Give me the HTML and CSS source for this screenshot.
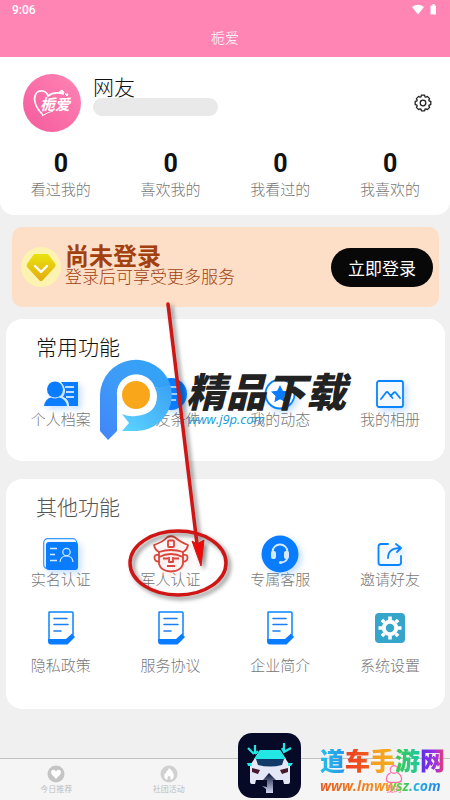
FILE: index.html
```html
<!DOCTYPE html>
<html lang="zh-CN">
<head>
    <meta charset="UTF-8">
    <meta name="viewport" content="width=device-width, initial-scale=1.0">
    <title>栀爱</title>
    <link rel="stylesheet" href="styles.css">
</head>
<body>
    <!-- Shared icon shapes -->
    <svg class="defs" width="0" height="0">
        <symbol id="doc" viewBox="0 0 28 34">
            <path d="M2 28V1.500Q2 1 2.500 1H25Q26 1 26 2V24" fill="#fff" stroke="#0a84ff" stroke-width="1.500"/>
            <path d="M1 28H19L25 22.500L28 26L20.500 33.500H4Q1 33.500 1 30Z" fill="#0a7cff"/>
            <path d="M7 7.500H20M7 13.500H21M7 20H14" stroke="#1a80f0" stroke-width="1.600" stroke-linecap="round"/>
        </symbol>
    </svg>

    <header class="header">
        <div class="status-bar">
            <span>9:06</span>
            <svg width="26" height="12" viewBox="0 0 26 12" fill="#fff">
                <path d="M0 3Q6 -1.500 12 3L6 10.500Z"/>
                <path d="M19 1.500H20.500V0H22.500V1.500H24V10.500H18.500V1.500Z"/>
            </svg>
        </div>
        <h1 class="header-title">栀爱</h1>
    </header>

    <main class="content">
        <section class="profile">
            <div class="profile-row">
                <div class="avatar">
                    <svg class="avatar-heart" width="58" height="58" viewBox="0 0 58 58" fill="none" stroke="#fff">
                        <path d="M20 41Q12 33 11.500 25Q12 16 20 17Q24 18 25 22Q31 17 41 20" stroke-width="1.700"/>
                        <path d="M19 42Q25 38 30 37" stroke-width="1"/>
                        <path d="M36 18L39 16L41 18L40 20ZM42 20L45 20L44 22Z" fill="#fff" stroke-width="1"/>
                    </svg>
                    <span class="avatar-text">栀爱</span>
                </div>
                <div class="profile-info">
                    <h2 class="profile-name">网友</h2>
                    <div class="profile-id"></div>
                </div>
                <button class="gear-btn" aria-label="设置">
                    <svg width="18" height="18" viewBox="0 0 18 18" fill="none" stroke="#222" stroke-width="1.300" stroke-linejoin="round">
                        <path d="M7.400 1.200H10.600L11 2.800L12 3.200L13.400 2.400L15.600 4.600L14.800 6L15.200 7L16.800 7.400V10.600L15.200 11L14.800 12L15.600 13.400L13.400 15.600L12 14.800L11 15.200L10.600 16.800H7.400L7 15.200L6 14.800L4.600 15.600L2.400 13.400L3.200 12L2.800 11L1.200 10.600V7.400L2.800 7L3.200 6L2.400 4.600L4.600 2.400L6 3.200L7 2.800Z"/>
                        <circle cx="9" cy="9" r="2.800"/>
                    </svg>
                </button>
            </div>
            <div class="stats">
                <a href="#" class="stat"><b>0</b><span>看过我的</span></a>
                <a href="#" class="stat"><b>0</b><span>喜欢我的</span></a>
                <a href="#" class="stat"><b>0</b><span>我看过的</span></a>
                <a href="#" class="stat"><b>0</b><span>我喜欢的</span></a>
            </div>
        </section>

        <section class="banner">
            <svg width="40" height="40" viewBox="0 0 40 40">
                <defs>
                    <linearGradient id="gem" x1="0" y1="0" x2="0" y2="1">
                        <stop offset="0" stop-color="#e8e30e"/>
                        <stop offset="1" stop-color="#e5a910"/>
                    </linearGradient>
                </defs>
                <circle cx="20" cy="20" r="20" fill="#fcf3b0"/>
                <path d="M13 7H27L34.500 17Q35 19 33.500 20.500L21.500 33.500Q20 35 18.500 33.500L6.500 20.500Q5 19 6 17Z" fill="url(#gem)"/>
                <path d="M14 19L20 25L26 19" fill="none" stroke="#fff" stroke-width="2.400" stroke-linecap="round" stroke-linejoin="round"/>
            </svg>
            <div class="banner-text">
                <h2>尚未登录</h2>
                <p>登录后可享受更多服务</p>
            </div>
            <button class="login-btn">立即登录</button>
        </section>

        <section class="card">
            <h2 class="card-title dark">常用功能</h2>
            <div class="menu">
                <a href="#" class="item">
                    <span class="icon shadow">
                        <svg width="34" height="26" viewBox="0 0 34 26" fill="#0a7cff">
                            <path d="M17 1H34V25H25Q25 18 19 16Q24 9 17 1Z"/>
                            <circle cx="11" cy="8.500" r="8"/>
                            <path d="M0 25Q1 18 7 16.500Q11 18.500 15 16.500Q22 18 23 25Z"/>
                            <path d="M21 6H30M22 11H30M22 16H30" stroke="#fff" stroke-width="1.600"/>
                        </svg>
                    </span>
                    <span>个人档案</span>
                </a>
                <a href="#" class="item">
                    <span class="icon shadow">
                        <svg width="34" height="34" viewBox="0 0 34 34">
                            <circle cx="17" cy="17" r="16" fill="#0a7cff"/>
                            <path d="M12 10H24M12 17H24M12 23H22" stroke="#d6eaff" stroke-width="1.600"/>
                        </svg>
                    </span>
                    <span>择友条件</span>
                </a>
                <a href="#" class="item">
                    <span class="icon shadow">
                        <svg width="32" height="32" viewBox="0 0 32 32">
                            <circle cx="16" cy="16" r="14.500" fill="#fff" stroke="#0a84ff" stroke-width="1.800"/>
                            <path d="M16 7L18.800 12.800L25 13.600L20.500 18L21.600 24.200L16 21.200L10.400 24.200L11.500 18L7 13.600L13.200 12.800Z" fill="#0a7cff"/>
                        </svg>
                    </span>
                    <span>我的动态</span>
                </a>
                <a href="#" class="item">
                    <span class="icon shadow">
                        <svg width="28" height="28" viewBox="0 0 28 28" fill="none" stroke="#0a84ff" stroke-width="1.800">
                            <rect x="1" y="1" width="26" height="26" rx="2" fill="#f3f9ff"/>
                            <path d="M5 19L10 12.500Q11 11.500 12 12.500L16.500 18M14.500 16L18 12.500Q19 11.500 20 13L24 18" stroke-linecap="round"/>
                        </svg>
                    </span>
                    <span>我的相册</span>
                </a>
            </div>

            <!-- Download site mark over the card -->
            <div class="mark">
                <svg width="76" height="84" viewBox="0 0 76 84">
                    <defs>
                        <linearGradient id="p1" x1="0" y1="1" x2="1" y2="0">
                            <stop offset="0" stop-color="#4285f8"/>
                            <stop offset="0.500" stop-color="#3d9cf8"/>
                            <stop offset="1" stop-color="#2fa5f5"/>
                        </linearGradient>
                        <linearGradient id="p2" x1="0" y1="1" x2="1" y2="0">
                            <stop offset="0" stop-color="#5cd4ff"/>
                            <stop offset="1" stop-color="#3aa0f5"/>
                        </linearGradient>
                    </defs>
                    <circle cx="37" cy="36" r="22" fill="#fff"/>
                    <path d="M0 72V36A36 36 0 0 1 70 25L55 29A19.500 19.500 0 0 0 17 37V72L8 81Z" fill="url(#p1)"/>
                    <path d="M55 29L70 25A36 36 0 0 1 37 72H22L29 64L22 55Q29 58 36 57Q57 55 57 37Q57 33 55 29Z" fill="url(#p2)"/>
                    <circle cx="36" cy="36" r="14" fill="#faa61a"/>
                </svg>
                <div class="mark-text">
                    <strong>精品下载</strong>
                    <em>www.j9p.com</em>
                </div>
            </div>
        </section>

        <section class="card other">
            <h2 class="card-title">其他功能</h2>
            <div class="menu">
                <a href="#" class="item">
                    <span class="icon shadow">
                        <svg width="36" height="32" viewBox="0 0 36 32" fill="none">
                            <rect x="0.700" y="0.700" width="33" height="30" rx="4" stroke="#3a9bff" stroke-width="1.200"/>
                            <rect x="3" y="4" width="32" height="28" rx="3" fill="#0a7cff"/>
                            <path d="M7 10.500H14M7 16.500H12M7 22.500H14" stroke="#d6eaff" stroke-width="1.300"/>
                            <circle cx="23.500" cy="14" r="3.700" stroke="#d6eaff" stroke-width="1.200"/>
                            <path d="M17 24Q17.500 18 23.500 18Q29.500 18 30 24" stroke="#d6eaff" stroke-width="1.200"/>
                        </svg>
                    </span>
                    <span>实名认证</span>
                </a>
                <a href="#" class="item">
                    <span class="icon red-shadow">
                        <svg width="36" height="38" viewBox="0 0 36 38" fill="none" stroke="#d9473c" stroke-width="1.800" stroke-linejoin="round">
                            <path d="M1 10Q10 7 14 2.500Q18 0 22 2.500Q27 7 35 10Q34 15 30 17Q18 13 6 17Q2 15 1 10Z"/>
                            <path d="M6 17V22Q18 16 30 22V17"/>
                            <rect x="15" y="5.500" width="6" height="6.500" rx="1"/>
                            <path d="M6 20Q1 19 1.500 23Q2 27 6 26.500M30 20Q35 19 34.500 23Q34 27 30 26.500"/>
                            <path d="M6 22V29Q8 36 18 36.500Q28 36 30 29V22"/>
                            <path d="M10 23.500H15M21 23.500H26M16 22V27H20V22M14 31H22"/>
                        </svg>
                    </span>
                    <span>军人认证</span>
                </a>
                <a href="#" class="item">
                    <span class="icon shadow">
                        <svg width="38" height="38" viewBox="0 0 38 38" fill="none">
                            <circle cx="19" cy="19" r="18.500" fill="#0a7cff"/>
                            <path d="M11.500 18V17A7.500 7.500 0 0 1 26.500 17V22Q26 27 20 27.500" stroke="#d6eaff" stroke-width="1.800"/>
                            <rect x="10" y="16" width="5" height="8" rx="2" fill="#d6eaff"/>
                            <rect x="23" y="16" width="5" height="8" rx="2" fill="#d6eaff"/>
                            <circle cx="19.500" cy="27.500" r="1.600" fill="#d6eaff"/>
                        </svg>
                    </span>
                    <span>专属客服</span>
                </a>
                <a href="#" class="item">
                    <span class="icon shadow">
                        <svg width="26" height="24" viewBox="0 0 26 24" fill="none" stroke="#0a84ff" stroke-width="1.800" stroke-linecap="round" stroke-linejoin="round">
                            <path d="M11 2H4Q1.500 2 1.500 4.500V20.500Q1.500 23 4 23H21.500Q24 23 24 20.500V14"/>
                            <path d="M11 16Q11 6 23.500 6M19 2L24 6L20 10"/>
                        </svg>
                    </span>
                    <span>邀请好友</span>
                </a>
                <a href="#" class="item spaced">
                    <span class="icon"><svg width="28" height="34"><use href="#doc"/></svg></span>
                    <span>隐私政策</span>
                </a>
                <a href="#" class="item spaced">
                    <span class="icon"><svg width="28" height="34"><use href="#doc"/></svg></span>
                    <span>服务协议</span>
                </a>
                <a href="#" class="item spaced">
                    <span class="icon"><svg width="28" height="34"><use href="#doc"/></svg></span>
                    <span>企业简介</span>
                </a>
                <a href="#" class="item spaced">
                    <span class="icon">
                        <svg width="30" height="30" viewBox="0 0 30 30">
                            <rect width="30" height="30" rx="4" fill="#35a5cc"/>
                            <circle cx="15" cy="15" r="6.200" fill="none" stroke="#fff" stroke-width="4"/>
                            <path d="M15 3.500V7M15 23V26.500M3.500 15H7M23 15H26.500M6.900 6.900L9.300 9.300M20.700 20.700L23.100 23.100M6.900 23.100L9.300 20.700M20.700 9.300L23.100 6.900" stroke="#fff" stroke-width="3.600"/>
                        </svg>
                    </span>
                    <span>系统设置</span>
                </a>
            </div>
        </section>

        <!-- Red arrow and ring pointing at 军人认证 -->
        <svg class="pointer" width="110" height="304" viewBox="0 0 110 304">
            <ellipse cx="53" cy="263" rx="48" ry="32" fill="none" stroke="#d01515" stroke-width="3.500"/>
            <path d="M43 4L72 244" stroke="#d01515" stroke-width="3.500" stroke-linecap="round"/>
            <path d="M67 241L72 244L79 240L76 266Z" fill="#f00808" stroke="#d01515" stroke-width="1"/>
        </svg>
    </main>

    <nav class="tabs">
        <a href="#" class="tab">
            <svg width="18" height="18" viewBox="0 0 18 18">
                <circle cx="9" cy="9" r="8.500" fill="#c4c4c4"/>
                <path d="M9 14L4.700 9.500Q3 6.500 5.500 5Q8 4.300 9 6.500Q10 4.300 12.500 5Q15 6.500 13.300 9.500Z" fill="#fff"/>
            </svg>
            <span>今日推荐</span>
        </a>
        <a href="#" class="tab">
            <svg width="18" height="18" viewBox="0 0 18 18">
                <circle cx="9" cy="9" r="8.500" fill="#d0d0d0"/>
                <path d="M9 3Q13 6 13.500 9Q14.500 12 12 14.500H10.500V12Q9 10 7.500 12V14.500H6Q3.500 12 4.500 9Q6 8.500 6.500 6.500Q8 6 9 3Z" fill="#fff"/>
            </svg>
            <span>社团活动</span>
        </a>
        <a href="#" class="tab active">
            <svg width="18" height="18" viewBox="0 0 18 18" fill="none" stroke="#ff6fa8" stroke-width="1.200">
                <circle cx="9" cy="4.500" r="3.800"/>
                <path d="M6 7.500Q1 10 1.500 15Q2 17.300 5 17.300H13Q16 17.300 16.500 15Q17 10 12 7.500"/>
            </svg>
            <span>我的</span>
        </a>

        <div class="site">
            <svg width="63" height="65" viewBox="0 0 63 65">
                <defs>
                    <linearGradient id="beam" x1="0" y1="0" x2="0" y2="1">
                        <stop offset="0" stop-color="#071033"/>
                        <stop offset="1" stop-color="#d5daf2"/>
                    </linearGradient>
                </defs>
                <rect width="63" height="65" rx="14" fill="#060a26"/>
                <path d="M22 17H42L49 28L52 32V49Q52 51 50 51H46L45 47H18L17 51H14Q12 51 12 49V32L15 28Z" fill="#e3e7f6"/>
                <path d="M22 17H42L48 26H16Z" fill="#22e7e5"/>
                <path d="M18 26H46L44 32Q32 35 20 32Z" fill="#123a68"/>
                <path d="M9 30H13L14 33H10ZM50 30H55L53 33H50Z" fill="#22e7e5"/>
                <path d="M14 35L22 37L20 41L14 39ZM50 35L42 37L44 41L50 39Z" fill="#46182c"/>
                <path d="M31 40L38 47H35V60H28V56L24 53L29 54V47H25Z" fill="url(#beam)"/>
                <path d="M17 12V21M10 15L16 21M17 21L20 18M46 10V19M44 15L46 19L53 15" fill="none" stroke="#22e7e5" stroke-width="2.200"/>
            </svg>
            <div class="site-text">
                <strong>道车手游网</strong>
                <em>www.lmwwsz.com</em>
            </div>
        </div>
    </nav>
</body>
</html>
```
FILE: styles.css
```css
* {
    box-sizing: border-box;
}
body {
    margin: 0;
    min-height: 100vh;
    display: flex;
    flex-direction: column;
    font-family: Roboto, "Noto Sans CJK SC", sans-serif;
    font-weight: 300;
    background-color: #f0f0f0;
    color: #111;
}
h1, h2, p {
    margin: 0;
    font-weight: 300;
}
a {
    color: inherit;
    text-decoration: none;
}
button {
    border: none;
    padding: 0;
    font-family: inherit;
    cursor: pointer;
}
svg {
    display: block;
    flex: none;
}
.defs {
    position: absolute;
}

/* Header */
.header {
    background-color: #ff85b5;
    color: #fff;
}
.status-bar {
    display: flex;
    justify-content: space-between;
    align-items: center;
    padding: 0 12px;
    font-size: 12px;
    font-weight: 500;
    line-height: 20px;
}
.header-title {
    font-size: 14px;
    line-height: 37px;
    text-align: center;
}

/* Profile */
.content {
    position: relative;
}
.profile {
    background-color: #fff;
    border-radius: 0 0 14px 14px;
    padding: 17px 5px 15px 6px;
}
.profile-row {
    display: flex;
    align-items: center;
    gap: 12px;
    padding: 0 13px 0 17px;
}
.avatar {
    position: relative;
    display: flex;
    align-items: center;
    justify-content: center;
    width: 58px;
    height: 58px;
    border-radius: 50%;
    background: linear-gradient(45deg, #f55a9c, #ff85b5);
    color: #fff;
}
.avatar-heart {
    position: absolute;
    top: 0;
    left: 0;
}
.avatar-text {
    padding-left: 6px;
    font-size: 15px;
    font-weight: 700;
    font-style: italic;
}
.profile-info {
    flex: 1;
    align-self: flex-start;
}
.profile-name {
    padding-top: 4px;
    font-size: 21px;
    line-height: 20px;
}
.profile-id {
    width: 125px;
    height: 18px;
    border-radius: 9px;
    background-color: #e9e9e9;
}
.gear-btn {
    background: none;
}
.stats {
    display: grid;
    grid-template-columns: repeat(4, 1fr);
    margin-top: 16px;
}
.stat {
    display: flex;
    flex-direction: column;
    align-items: center;
    font-size: 15px;
    line-height: 20px;
    color: #777;
}
.stat b {
    font-size: 25px;
    font-weight: 700;
    line-height: 32px;
    color: #111;
}

/* Login banner */
.banner {
    display: flex;
    align-items: center;
    gap: 4px;
    margin: 12px 11px 12px 12px;
    padding: 20px 6px 20px 9px;
    border-radius: 10px;
    background-color: #fddec6;
    color: #a3400f;
}
.banner-text {
    flex: 1;
}
.banner-text h2 {
    font-size: 24px;
    font-weight: 700;
    line-height: 20px;
}
.banner-text p {
    font-size: 17px;
    line-height: 20px;
}
.login-btn {
    width: 102px;
    height: 39px;
    border-radius: 20px;
    background-color: #080808;
    color: #fff;
    font-size: 17px;
}

/* Function cards */
.card {
    position: relative;
    margin: 0 5px 18px 6px;
    padding: 16px 0 31px;
    border-radius: 16px;
    background-color: #fff;
}
.card.other {
    padding-bottom: 33px;
}
.card-title {
    padding-left: 30px;
    font-size: 21px;
    line-height: 26px;
    color: #555;
}
.card-title.dark {
    color: #111;
}
.menu {
    display: grid;
    grid-template-columns: repeat(4, 1fr);
    row-gap: 22px;
    margin-top: 17px;
}
.item {
    display: flex;
    flex-direction: column;
    align-items: center;
    font-size: 15px;
    line-height: 20px;
    color: #777;
}
.icon {
    display: flex;
    align-items: center;
    height: 32px;
}
.spaced {
    gap: 12px;
}
.shadow {
    filter: drop-shadow(3px 3px 3px rgba(10, 124, 255, 0.25));
}
.red-shadow {
    filter: drop-shadow(3px 3px 3px rgba(217, 71, 60, 0.2));
}

/* Marks lying over the page */
.mark {
    position: absolute;
    top: 40px;
    left: 94px;
    display: flex;
    gap: 10px;
    pointer-events: none;
}
.mark-text {
    display: flex;
    flex-direction: column;
    padding-top: 18px;
}
.mark-text strong {
    font-size: 40px;
    font-weight: 900;
    font-style: italic;
    line-height: 34px;
    color: #222;
    white-space: nowrap;
}
.mark-text em {
    padding-left: 2px;
    font-family: "Open Sans", sans-serif;
    font-size: 13px;
    font-weight: 400;
    line-height: 16px;
    color: #159bd8;
}
.pointer {
    position: absolute;
    top: 243px;
    left: 125px;
    filter: drop-shadow(3px 3px 2px rgba(0, 0, 0, 0.45));
    pointer-events: none;
}

/* Bottom tabs */
.tabs {
    position: relative;
    display: grid;
    grid-template-columns: repeat(4, 1fr);
    margin-top: auto;
    padding: 6px 0 4px;
    border-top: 1px solid #c2c2c2;
    background-color: #f5f5f5;
}
.tab {
    display: flex;
    flex-direction: column;
    align-items: center;
    gap: 1px;
    font-size: 8px;
    font-weight: 400;
    line-height: 12px;
    color: #bdbdbd;
}
.tab.active {
    grid-column: 4;
    color: #ff6fa8;
}
.site {
    position: absolute;
    right: 5px;
    bottom: 2px;
    display: flex;
    align-items: center;
    gap: 19px;
    pointer-events: none;
}
.site-text {
    display: flex;
    flex-direction: column;
    padding-top: 14px;
}
.site-text strong,
.site-text em {
    background-clip: text;
    -webkit-background-clip: text;
    color: transparent;
    white-space: nowrap;
}
.site-text strong {
    font-size: 25px;
    font-weight: 900;
    line-height: 26px;
    background-image: linear-gradient(90deg, #22c0ea 0%, #2898e8 19%, #ee4020 21%, #f05a20 39%, #f79a1e 41%, #f0b020 59%, #3cc850 61%, #20c8a0 79%, #5a30e8 81%, #a030e0 92%, #f04060 100%);
}
.site-text em {
    font-family: "Open Sans", sans-serif;
    font-size: 14px;
    font-weight: 700;
    line-height: 22px;
    background-image: linear-gradient(90deg, #e85a20 0%, #f08020 35%, #f09a20 55%, #70d030 60%, #40c860 70%, #20b8e0 74%, #2878e8 100%);
}
```
